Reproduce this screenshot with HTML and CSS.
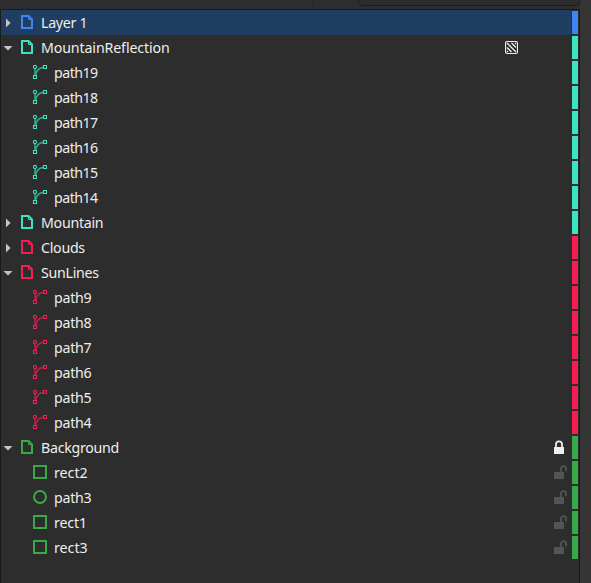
FILE: index.html
```html
<!DOCTYPE html>
<html lang="en">
<head>
<meta charset="utf-8">
<title>Layers and Objects</title>
<link rel="stylesheet" href="styles.css">
</head>
<body>
<svg class="defs" width="0" height="0">
  <symbol id="layer" viewBox="0 0 16 16"><path d="M3 2h6.6L13 5.4V14H3z" fill="none" stroke="currentColor" stroke-width="2"/><path d="M9.5 2v3.5H13" fill="none" stroke="currentColor" stroke-width="1"/></symbol>
  <symbol id="path" viewBox="0 0 16 16"><path d="M3 5v6M3.8 11C4.3 7 7 4.2 11 3.4" fill="none" stroke="currentColor" stroke-width="1.6" opacity=".65"/><g fill="none" stroke="currentColor" stroke-width="1.1"><circle cx="3" cy="3" r="1.6"/><path d="M1.5 11.5h3v3h-3zM11.5 1.5h3v3h-3z"/></g></symbol>
  <symbol id="rect" viewBox="0 0 16 16"><path d="M2 2h12v12H2z" fill="none" stroke="currentColor" stroke-width="2"/></symbol>
  <symbol id="circle" viewBox="0 0 16 16"><circle cx="8" cy="8" r="6" fill="none" stroke="currentColor" stroke-width="2"/></symbol>
  <symbol id="right" viewBox="0 0 10 10"><path d="M3 .5L7.6 5 3 9.5z" fill="currentColor"/></symbol>
  <symbol id="down" viewBox="0 0 10 10"><path d="M.5 3h9L5 7.6z" fill="currentColor"/></symbol>
  <symbol id="mask" viewBox="0 0 13 13"><rect x=".55" y=".55" width="11.9" height="11.9" rx="1.5" fill="none" stroke="currentColor" stroke-width="1.1"/><path d="M2 6.5L6.5 11M2 2l9 9M6.5 2L11 6.5M2 10l1 1M10 2l1 1" stroke="currentColor" stroke-width="1.3"/></symbol>
  <symbol id="locked" viewBox="0 0 16 16"><path d="M3 7h10v7H3z" fill="currentColor"/><path d="M5 7.5V4.3a3 3 0 0 1 6 0v3.2" fill="none" stroke="currentColor" stroke-width="1.8"/></symbol>
  <symbol id="unlocked" viewBox="0 0 16 16"><path d="M3 7h10v7H3z" fill="currentColor"/><path d="M10 7.5V3.7a2.5 2.5 0 0 1 5 0v2.5" fill="none" stroke="currentColor" stroke-width="1.8"/></symbol>
</svg>
<div class="toolbar"><div class="spacer"></div><div class="search"></div></div>
<div class="tree">
  <div class="row blue selected"><svg class="arrow"><use href="#right"/></svg><svg class="icon"><use href="#layer"/></svg><span class="name">Layer 1</span><i class="tag"></i></div>
  <div class="row teal"><svg class="arrow"><use href="#down"/></svg><svg class="icon"><use href="#layer"/></svg><span class="name long">MountainReflection</span><svg class="mask"><use href="#mask"/></svg><i class="tag"></i></div>
  <div class="row teal child"><svg class="icon"><use href="#path"/></svg><span class="name tight">path19</span><i class="tag"></i></div>
  <div class="row teal child"><svg class="icon"><use href="#path"/></svg><span class="name tight">path18</span><i class="tag"></i></div>
  <div class="row teal child"><svg class="icon"><use href="#path"/></svg><span class="name tight">path17</span><i class="tag"></i></div>
  <div class="row teal child"><svg class="icon"><use href="#path"/></svg><span class="name tight">path16</span><i class="tag"></i></div>
  <div class="row teal child"><svg class="icon"><use href="#path"/></svg><span class="name tight">path15</span><i class="tag"></i></div>
  <div class="row teal child"><svg class="icon"><use href="#path"/></svg><span class="name tight">path14</span><i class="tag"></i></div>
  <div class="row teal"><svg class="arrow"><use href="#right"/></svg><svg class="icon"><use href="#layer"/></svg><span class="name">Mountain</span><i class="tag"></i></div>
  <div class="row red"><svg class="arrow"><use href="#right"/></svg><svg class="icon"><use href="#layer"/></svg><span class="name">Clouds</span><i class="tag"></i></div>
  <div class="row red"><svg class="arrow"><use href="#down"/></svg><svg class="icon"><use href="#layer"/></svg><span class="name">SunLines</span><i class="tag"></i></div>
  <div class="row red child"><svg class="icon"><use href="#path"/></svg><span class="name">path9</span><i class="tag"></i></div>
  <div class="row red child"><svg class="icon"><use href="#path"/></svg><span class="name">path8</span><i class="tag"></i></div>
  <div class="row red child"><svg class="icon"><use href="#path"/></svg><span class="name">path7</span><i class="tag"></i></div>
  <div class="row red child"><svg class="icon"><use href="#path"/></svg><span class="name">path6</span><i class="tag"></i></div>
  <div class="row red child"><svg class="icon"><use href="#path"/></svg><span class="name">path5</span><i class="tag"></i></div>
  <div class="row red child"><svg class="icon"><use href="#path"/></svg><span class="name">path4</span><i class="tag"></i></div>
  <div class="row green"><svg class="arrow"><use href="#down"/></svg><svg class="icon"><use href="#layer"/></svg><span class="name">Background</span><svg class="lock on"><use href="#locked"/></svg><i class="tag"></i></div>
  <div class="row green child"><svg class="icon"><use href="#rect"/></svg><span class="name loose">rect2</span><svg class="lock"><use href="#unlocked"/></svg><i class="tag"></i></div>
  <div class="row green child"><svg class="icon"><use href="#circle"/></svg><span class="name">path3</span><svg class="lock"><use href="#unlocked"/></svg><i class="tag"></i></div>
  <div class="row green child"><svg class="icon"><use href="#rect"/></svg><span class="name long">rect1</span><svg class="lock"><use href="#unlocked"/></svg><i class="tag"></i></div>
  <div class="row green child"><svg class="icon"><use href="#rect"/></svg><span class="name loose">rect3</span><svg class="lock"><use href="#unlocked"/></svg><i class="tag"></i></div>
</div>
</body>
</html>
```
FILE: styles.css
```css
* { box-sizing: border-box; }
body {
  margin: 0;
  width: 591px;
  height: 583px;
  overflow: hidden;
  display: flex;
  flex-direction: column;
  background: linear-gradient(to right, #2d2d2d 580px, #353535 580px);
  font: 14.2px "Noto Sans", sans-serif;
  color: #eeeeec;
}
.defs { display: none; }
.toolbar { display: flex; height: 9px; }
.spacer { width: 358px; height: 5px; background: linear-gradient(to right, transparent 312px, #272727 312px, #272727 313px, transparent 313px); }
.search {
  width: 222px;
  height: 6px;
  border: 1px solid #1b1b1b;
  border-top: 0;
  border-radius: 0 0 5px 5px;
}
.tree {
  width: 580px;
  height: 574px;
  border: 1px solid #1b1b1b;
  border-bottom: 0;
  background: #2d2d2d;
}
.row { display: flex; align-items: center; height: 25px; padding-left: 2px; }
.child { padding-left: 31px; }
.arrow { width: 10px; height: 10px; margin: 1px 6px 0 0; color: #c4c4c2; }
.icon { width: 16px; height: 16px; margin: 0 6px 1px 0; flex: none; }
.name { flex: 1; color: #eeeeec; line-height: 25px; letter-spacing: -0.27px; }
.long { letter-spacing: -0.12px; }
.tight { letter-spacing: -0.52px; }
.loose { letter-spacing: 0; }
.mask { width: 13px; height: 13px; margin-right: 54px; color: #eeeeec; }
.lock { width: 16px; height: 16px; margin: 1px 5px 0 0; color: #545452; }
.lock.on { color: #eeeeec; }
.tag { width: 6px; height: 23px; margin-right: 1px; background: currentColor; }
.blue { color: #3f84f2; }
.teal { color: #3ce3bf; }
.red { color: #f41e54; }
.green { color: #38a94a; }
.selected { background: linear-gradient(to right, #1f3e62 570px, #2d2d2d 570px); }
```
